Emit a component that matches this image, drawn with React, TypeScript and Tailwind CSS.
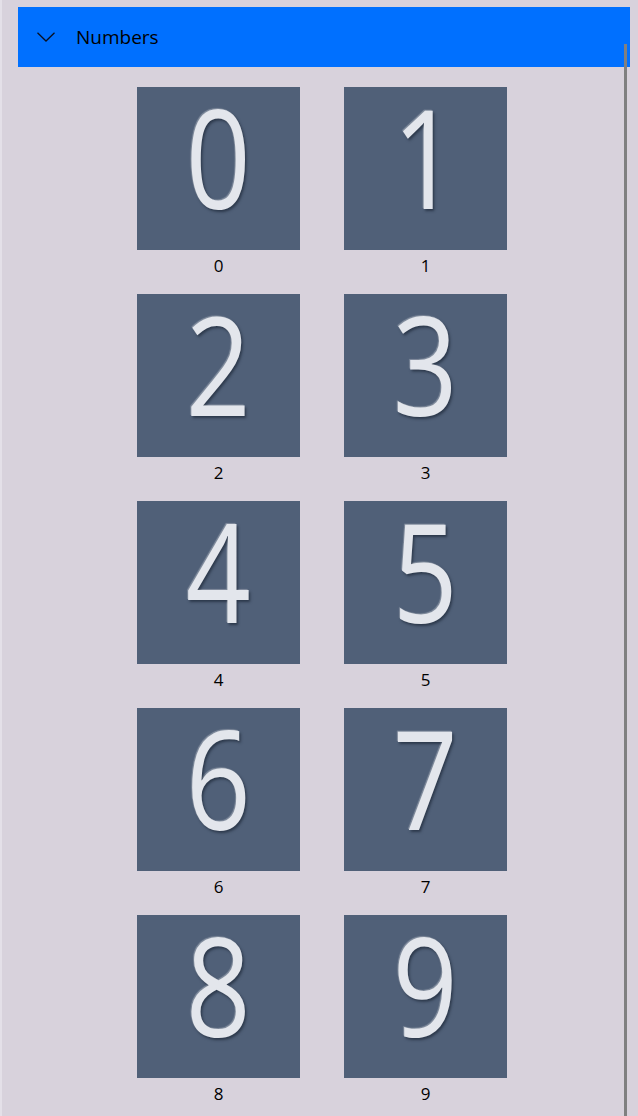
const digits = ["0", "1", "2", "3", "4", "5", "6", "7", "8", "9"];

export default function App() {
  return (
    <div
      className="relative w-[638px] h-[1116px] overflow-hidden bg-[#d8d2dc] border-l-2 border-[#e4e0e8]"
      style={{ fontFamily: '"Open Sans", "Noto Sans", sans-serif' }}
    >
      {/* Expander header */}
      <div className="mt-[7px] ml-[16px] w-[612px] h-[60px] bg-[#0070ff] flex items-center text-black">
        <svg className="ml-[19px] w-[18px] h-[10px]" viewBox="0 0 18 10" fill="none">
          <polyline points="0.5,0.8 9,9 17.5,0.8" stroke="#0a1020" strokeWidth="1.3" />
        </svg>
        <span className="ml-[21px] text-[19px] leading-none">Numbers</span>
      </div>

      {/* Scrollbar */}
      <div className="absolute left-[622px] top-[44px] bottom-0 w-[3px] bg-[#808080]" />

      {/* Tiles */}
      <div className="mt-[20px] ml-[135px] grid grid-cols-[163px_163px] gap-x-[44px]">
        {digits.map((d) => (
          <div key={d} className="flex flex-col items-center h-[207px]">
            <div className="w-[163px] h-[163px] bg-[#506078] flex items-center justify-center overflow-hidden">
              <span
                className="text-[137px] font-medium leading-none text-[#e3e6ec] -translate-y-[12px] scale-x-[0.83]"
                style={{ textShadow: "2px 2px 3px rgba(20,30,45,0.6), -1px -1px 1px rgba(255,255,255,0.3)" }}
              >
                {d}
              </span>
            </div>
            <span className="mt-[4px] text-[17px] leading-[24px] text-black">{d}</span>
          </div>
        ))}
      </div>
    </div>
  );
}
